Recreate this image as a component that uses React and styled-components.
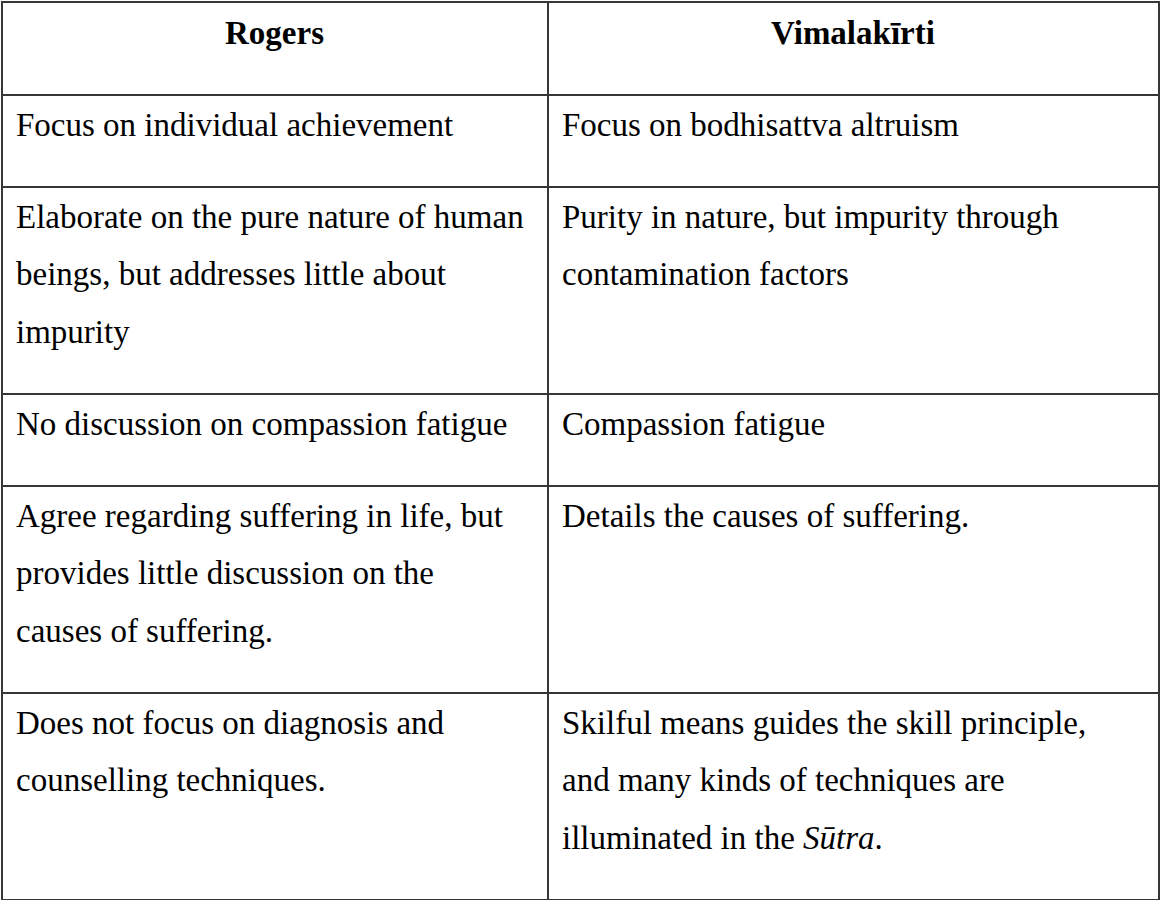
import styled, { createGlobalStyle } from 'styled-components';

const GlobalStyle = createGlobalStyle`
  html, body {
    margin: 0;
    padding: 0;
    background: #ffffff;
  }
`;

const Table = styled.table`
  width: 1159px;
  border-collapse: collapse;
  table-layout: fixed;
  font-family: "Liberation Serif", "Times New Roman", serif;
  font-size: 33px;
  line-height: 57.5px;
  color: #000;
  margin-top: 1px;
  margin-left: 1px;
`;

const Cell = styled.td`
  border: 2px solid #363636;
  padding: 1px 14px 31.5px 13px;
  vertical-align: top;
  text-align: left;
  white-space: nowrap;
`;

const Head = styled.th`
  border: 2px solid #363636;
  padding: 2px 14px 31px 13px;
  vertical-align: top;
  text-align: center;
  font-weight: bold;
`;

const rows = [
  [['Focus on individual achievement'], ['Focus on bodhisattva altruism']],
  [
    ['Elaborate on the pure nature of human', 'beings, but addresses little about', 'impurity'],
    ['Purity in nature, but impurity through', 'contamination factors'],
  ],
  [['No discussion on compassion fatigue'], ['Compassion fatigue']],
  [
    ['Agree regarding suffering in life, but', 'provides little discussion on the', 'causes of suffering.'],
    ['Details the causes of suffering.'],
  ],
  [
    ['Does not focus on diagnosis and', 'counselling techniques.'],
    [
      'Skilful means guides the skill principle,',
      'and many kinds of techniques are',
      <>illuminated in the <em>Sūtra</em>.</>,
    ],
  ],
];

function Lines({ lines }) {
  return lines.map((line, i) => (
    <span key={i}>
      {i > 0 && <br />}
      {line}
    </span>
  ));
}

export default function App() {
  return (
    <>
      <GlobalStyle />
      <Table>
        <colgroup>
          <col style={{ width: 546 }} />
          <col />
        </colgroup>
        <thead>
          <tr>
            <Head>Rogers</Head>
            <Head>Vimalakīrti</Head>
          </tr>
        </thead>
        <tbody>
          {rows.map((row, i) => (
            <tr key={i}>
              <Cell><Lines lines={row[0]} /></Cell>
              <Cell><Lines lines={row[1]} /></Cell>
            </tr>
          ))}
        </tbody>
      </Table>
    </>
  );
}
